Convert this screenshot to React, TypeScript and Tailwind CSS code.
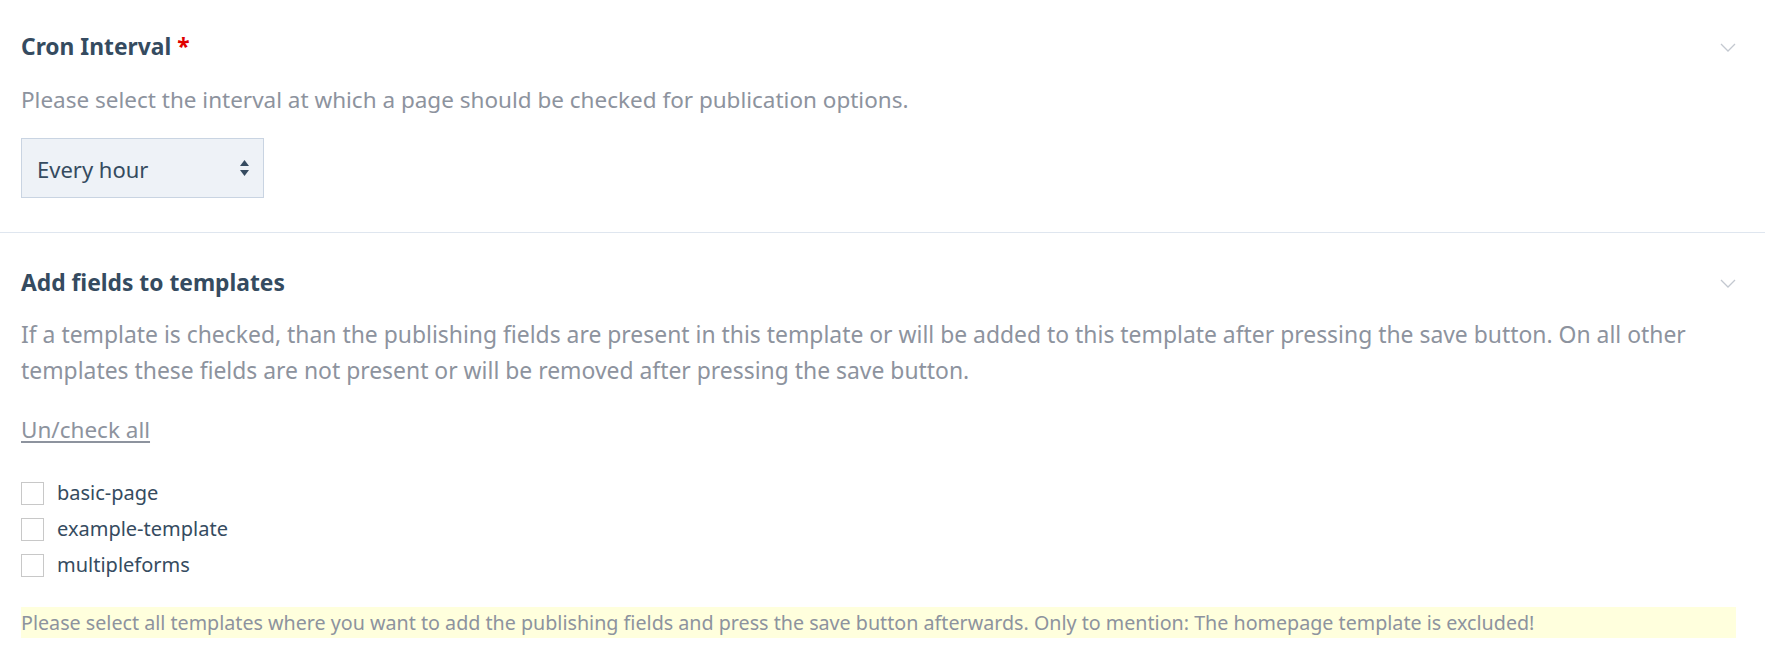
import { useState } from "react";

const templates = ["basic-page", "example-template", "multipleforms"];

function Chevron() {
  return (
    <svg width="16" height="9" viewBox="0 0 16 9" fill="none">
      <polyline points="1,1 8,8 15,1" stroke="#c3c8d0" strokeWidth="1.3" />
    </svg>
  );
}

export default function App() {
  const [interval, setInterval] = useState("hourly");
  const [checked, setChecked] = useState<string[]>([]);

  // Toggle all templates on/off
  const toggleAll = () => {
    setChecked((prev) => (prev.length === templates.length ? [] : [...templates]));
  };

  const toggleOne = (name: string) => {
    setChecked((prev) =>
      prev.includes(name) ? prev.filter((n) => n !== name) : [...prev, name]
    );
  };

  return (
    <div className="min-h-screen bg-white font-['Noto_Sans',sans-serif] text-[#354b60]">
      {/* Cron Interval */}
      <div className="border-b border-[#dfe6ef] pl-[21px] pr-[29px] pt-[33px] pb-[34px]">
        <div className="flex items-center justify-between h-[28px]">
          <h2 className="text-[22.8px] leading-[28px] font-bold">
            Cron Interval <span className="text-[#e00000]">*</span>
          </h2>
          <Chevron />
        </div>
        <p className="mt-[21px] text-[22.5px] leading-[36px] text-[#8d939e]">
          Please select the interval at which a page should be checked for publication options.
        </p>
        <div className="relative mt-[20px] w-[243px] h-[60px]">
          <select
            value={interval}
            onChange={(e) => setInterval(e.target.value)}
            className="appearance-none w-full h-full bg-[#eef2f7] border border-[#c9d4e2] pl-[15px] pr-8 pt-[2px] text-[22px] text-[#354b60] outline-none"
          >
            <option value="hourly">Every hour</option>
            <option value="daily">Every day</option>
          </select>
          <svg
            width="9"
            height="16"
            viewBox="0 0 9 16"
            className="pointer-events-none absolute right-[15px] top-[22px]"
          >
            <polygon points="4.5,0 9,6 0,6" fill="#354b60" />
            <polygon points="0,10 9,10 4.5,16" fill="#354b60" />
          </svg>
        </div>
      </div>

      {/* Add fields to templates */}
      <div className="pl-[21px] pr-[29px] pt-[36px] pb-6">
        <div className="flex items-center justify-between h-[28px]">
          <h2 className="text-[22.8px] leading-[28px] font-bold">Add fields to templates</h2>
          <Chevron />
        </div>
        <p className="mt-[20px] text-[22.9px] leading-[36px] text-[#8d939e]">
          If a template is checked, than the publishing fields are present in this template or will be added to this template after pressing the save button. On all other templates these fields are not present or will be removed after pressing the save button.
        </p>
        <p className="mt-[23px] text-[22.5px] leading-[36px] text-[#8d939e]">
          <a href="#" onClick={(e) => { e.preventDefault(); toggleAll(); }} className="underline underline-offset-[3px]">
            Un/check all
          </a>
        </p>
        <ul className="mt-[27px] flex flex-col">
          {templates.map((t) => (
            <li key={t} className="h-[36px] flex items-center">
              <label className="flex items-center gap-[13px] cursor-pointer">
                <input
                  type="checkbox"
                  checked={checked.includes(t)}
                  onChange={() => toggleOne(t)}
                  className="appearance-none w-[23px] h-[23px] border border-[#c8c8c8] bg-white checked:bg-[#354b60]"
                />
                <span className="text-[20px] text-[#354b60]">{t}</span>
              </label>
            </li>
          ))}
        </ul>
        <p className="mt-[24px] h-[31px] flex items-center bg-[#ffffdd] text-[19.7px] text-[#8d939e]">
          Please select all templates where you want to add the publishing fields and press the save button afterwards. Only to mention: The homepage template is excluded!
        </p>
      </div>
    </div>
  );
}
